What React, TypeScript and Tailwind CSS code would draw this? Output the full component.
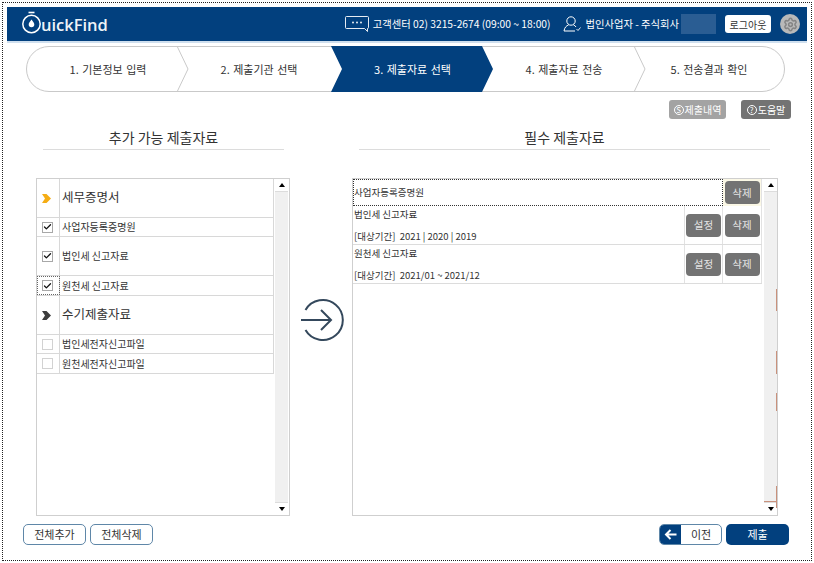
import React from 'react';
import { Check, Settings } from 'lucide-react';

const font = "[font-family:'Noto_Sans_CJK_KR','Liberation_Sans',sans-serif]";

const steps = [
  { label: '1. 기본정보 입력', box: 'w-[150px] pl-[12px]' },
  { label: '2. 제출기관 선택', box: 'w-[154px] pl-[10px]' },
  { label: '3. 제출자료 선택', box: 'w-[151px] pl-[12px]' },
  { label: '4. 제출자료 전송', box: 'w-[152px] pl-[12px]' },
  { label: '5. 전송결과 확인', box: 'w-[150px]' },
];

function Logo() {
  return (
    <div className="flex items-center">
      <svg width="19" height="24" viewBox="0 0 19 24" className="mt-[-3px]">
        <path d="M6.5 1.5h6" stroke="#fff" strokeWidth="1.6" fill="none" />
        <circle cx="9.5" cy="13" r="8.7" stroke="#fff" strokeWidth="1.5" fill="none" />
        <path d="M9.5 8.5c2 2.6 2.8 3.7 2.8 5a2.8 2.8 0 0 1-5.6 0c0-1.3.8-2.4 2.8-5z" fill="#fff" />
      </svg>
      <span className="text-[16.5px] leading-none font-semibold text-[#eef3f8] [font-family:'Open_Sans',sans-serif] mt-[3px]">uickFind</span>
    </div>
  );
}

function Stepper() {
  return (
    <div className="relative flex w-[759px] h-[46px] ml-[19px] mt-[3px] rounded-full border border-[#c9c9c9] bg-white">
      {steps.map((s, i) => (
        <div key={s.label} className={`relative flex items-center justify-center ${s.box} h-full shrink-0`}>
          {i === 2 && (
            <svg width="163" height="46" viewBox="0 0 163 46" className="absolute left-0 top-[-1px]">
              <path d="M0 0H151L162 23L151 46H0L11 23Z" fill="#02407e" />
            </svg>
          )}
          {(i === 0 || i === 3) && (
            <svg width="13" height="46" viewBox="0 0 13 46" className="absolute left-full top-[-1px]">
              <path d="M0 0L11 23L0 46" stroke="#c9c9c9" fill="none" />
            </svg>
          )}
          <span className={`relative text-[11px] [word-spacing:1px] ${i === 2 ? 'text-white' : 'text-[#333]'}`}>{s.label}</span>
        </div>
      ))}
    </div>
  );
}

function Box({ checked }: { checked?: boolean }) {
  return (
    <span className={`flex items-center justify-center w-[11px] h-[11px] border bg-white ${checked ? 'border-[#a8a8a8]' : 'border-[#d2d2d2]'}`}>
      {checked && <Check size={10} strokeWidth={3.5} className="text-[#111]" />}
    </span>
  );
}

function Chevron({ color }: { color: string }) {
  return (
    <svg width="10" height="9" viewBox="0 0 10 9">
      <path d="M0 0H4.5L9 4.5L4.5 9H0L3 4.5Z" fill={color} />
    </svg>
  );
}

function Scrollbar() {
  return (
    <div className="flex flex-col w-[13px] h-full bg-[#f0f0f0] shrink-0">
      <div className="flex items-center justify-center h-[13px] bg-white border-b border-[#dcdcdc]">
        <span className="border-x-[3px] border-x-transparent border-b-[4px] border-b-black" />
      </div>
      <div className="flex-1" />
      <div className="flex items-center justify-center h-[13px] bg-white border-t border-[#dcdcdc]">
        <span className="border-x-[3px] border-x-transparent border-t-[4px] border-t-black" />
      </div>
    </div>
  );
}

function HeadRow({ label, color }: { label: string; color: string }) {
  return (
    <div className="flex h-[39px] border-b border-[#d8d8d8]">
      <div className="flex items-center justify-center w-[23px] pr-[2px] border-r border-[#d8d8d8]">
        <Chevron color={color} />
      </div>
      <div className="flex items-center pl-[2px] pb-[1px] text-[12.5px] text-[#333]">{label}</div>
    </div>
  );
}

function CheckRow({ label, checked, h, focus }: { label: string; checked?: boolean; h: string; focus?: boolean }) {
  return (
    <div className={`flex ${h} border-b border-[#d8d8d8]`}>
      <div className={`flex items-center justify-center w-[23px] pr-[2px] border-r border-[#d8d8d8] ${focus ? 'outline-1 outline-dotted outline-[#666] -outline-offset-1' : ''}`}>
        <Box checked={checked} />
      </div>
      <div className="flex items-center pl-[2px] pb-[1px] text-[10px] text-[#333]">{label}</div>
    </div>
  );
}

function GrayBtn({ label }: { label: string }) {
  return (
    <button className="w-[35px] h-[23px] rounded-[4px] bg-[#737373] text-[10.5px] text-[#e4e4e4]">{label}</button>
  );
}

function DocRow({ title, period }: { title: string; period: string }) {
  return (
    <div className="flex h-[39px] border-b border-[#dcdcdc]">
      <div className="flex flex-col justify-between flex-1 pl-[1px] pt-[2px] pb-[1px] text-[9.5px] leading-[13px] text-[#333] whitespace-pre">
        <span>{title}</span>
        <span>{period}</span>
      </div>
      <div className="flex items-center justify-center w-[39px] border-x border-[#e2e2e2]">
        <GrayBtn label="설정" />
      </div>
      <div className="flex items-center justify-center w-[39px] border-r border-[#e2e2e2]">
        <GrayBtn label="삭제" />
      </div>
    </div>
  );
}

function OutlineBtn({ label }: { label: string }) {
  return (
    <button className="w-[63px] h-[21px] rounded-[5px] border border-[#5f87a8] bg-white text-[11px] text-[#333]">{label}</button>
  );
}

function Ring({ mark }: { mark: string }) {
  return (
    <span className="inline-flex items-center justify-center w-[10px] h-[10px] mr-[1px] rounded-full border border-white text-[8px] leading-none">{mark}</span>
  );
}

export default function App() {
  return (
    <div className={`w-[814px] h-[563px] bg-white overflow-hidden pt-[2px] pl-[2px] ${font}`}>
      <div className="w-[810px] h-[559px] border border-dotted border-[#222] pt-[4px] pl-[4px]">
        <header className="flex items-center w-[800px] h-[36px] pl-[15px] bg-[#02407e] border-b-2 border-[#cfdfee]">
          <Logo />
          <div className="flex items-center ml-auto text-[10.3px] text-white">
            <svg width="24" height="16" viewBox="0 0 24 16" className="mr-[4px]">
              <path d="M1.5.5h21a1 1 0 0 1 1 1v10a1 1 0 0 1-1 1v3l-3-3h-18a1 1 0 0 1-1-1v-10a1 1 0 0 1 1-1z" fill="none" stroke="#fff" strokeWidth="0.9" />
              <circle cx="8" cy="6.5" r="0.9" fill="#fff" />
              <circle cx="12" cy="6.5" r="0.9" fill="#fff" />
              <circle cx="16" cy="6.5" r="0.9" fill="#fff" />
            </svg>
            <span>고객센터 02) 3215-2674 (09:00 ~ 18:00)</span>
            <svg width="18" height="16" viewBox="0 0 18 16" className="ml-[12px] mr-[5px]">
              <circle cx="8" cy="5" r="4.2" fill="none" stroke="#fff" strokeWidth="1" />
              <path d="M1 15c.5-3.5 2.5-5.5 4.5-6M10.5 9c1 .3 2 1 2.5 2M1 15h11" fill="none" stroke="#fff" strokeWidth="1" />
              <path d="M13.5 13l1.5 1.5 2.5-3" fill="none" stroke="#fff" strokeWidth="0.9" />
            </svg>
            <span>법인사업자 - 주식회사</span>
            <span className="w-[35px] h-[20px] ml-[2px] bg-[#2a5d93]" />
            <button className="ml-[9px] w-[46px] h-[18px] rounded-[3px] bg-white text-[10px] text-[#333]">로그아웃</button>
            <span className="flex items-center justify-center w-[20px] h-[20px] ml-[9px] mr-[7px] rounded-full bg-[#b9b9b9]">
              <Settings size={15} strokeWidth={2.4} className="text-[#858585]" />
            </span>
          </div>
        </header>

        <Stepper />

        <div className="flex justify-end gap-[15px] w-[784px] mt-[8px]">
          <button className="flex items-center justify-center w-[57px] h-[19px] rounded-[3px] bg-[#a3a3a3] text-[10px] text-white"><Ring mark="S" />제출내역</button>
          <button className="flex items-center justify-center w-[50px] h-[19px] rounded-[3px] bg-[#737373] text-[10px] text-white"><Ring mark="?" />도움말</button>
        </div>

        <div className="flex mt-[1px]">
          <div className="w-[241px] ml-[36px] border-b border-[#dcdcdc] pt-[6px] text-center text-[14px] leading-[23px] text-[#333]">추가 가능 제출자료</div>
          <div className="w-[411px] ml-[75px] border-b border-[#dcdcdc] pt-[6px] text-center text-[14px] leading-[23px] text-[#333]">필수 제출자료</div>
        </div>

        <div className="flex items-start mt-[28px]">
          <div className="flex flex-col ml-[16px]">
            <div className="flex ml-[13px] w-[254px] h-[338px] border border-[#cfcfcf] bg-white">
              <div className="w-[237px] h-[195px] border-r border-[#d8d8d8]">
                <HeadRow label="세무증명서" color="#f5ad14" />
                <CheckRow label="사업자등록증명원" checked h="h-[19px]" />
                <CheckRow label="법인세 신고자료" checked h="h-[39px]" />
                <CheckRow label="원천세 신고자료" checked h="h-[20px]" focus />
                <HeadRow label="수기제출자료" color="#3d3d3d" />
                <CheckRow label="법인세전자신고파일" h="h-[19px]" />
                <CheckRow label="원천세전자신고파일" h="h-[20px]" />
              </div>
              <div className="ml-auto mr-[1px] h-full">
                <Scrollbar />
              </div>
            </div>
            <div className="flex gap-[4px] mt-[8px]">
              <OutlineBtn label="전체추가" />
              <OutlineBtn label="전체삭제" />
            </div>
          </div>

          <svg width="44" height="44" viewBox="0 0 44 44" className="ml-[10px] mt-[120px] shrink-0">
            <path d="M5.5 12a20 20 0 1 1 0 20" fill="none" stroke="#34485c" strokeWidth="2" />
            <path d="M1 22h30M21 12l10 10-10 10" fill="none" stroke="#34485c" strokeWidth="2" />
          </svg>

          <div className="flex flex-col ml-[8px]">
            <div className="relative flex w-[426px] h-[338px] border border-[#cfcfcf] bg-white">
              <div className="w-[409px]">
                <div className="flex h-[27px]">
                  <div className="flex items-center flex-1 text-[9.5px] text-[#333] border border-dotted border-[#333]">사업자등록증명원</div>
                  <div className="flex items-center justify-center w-[39px] bg-[#fbf8e6] border-r border-[#e2e2e2]">
                    <GrayBtn label="삭제" />
                  </div>
                </div>
                <DocRow title="법인세 신고자료" period="[대상기간]  2021 | 2020 | 2019" />
                <DocRow title="원천세 신고자료" period="[대상기간]  2021/01 ~ 2021/12" />
              </div>
              <div className="ml-auto h-full">
                <Scrollbar />
              </div>
              {/* 스크롤바 오른쪽에 남은 주황색 자국 */}
              <span className="absolute right-0 top-[110px] w-[1px] h-[22px] bg-[#c9917c]" />
              <span className="absolute right-0 top-[172px] w-[1px] h-[23px] bg-[#c9917c]" />
              <span className="absolute right-0 top-[214px] w-[1px] h-[18px] bg-[#c9917c]" />
              <span className="absolute right-0 top-[307px] w-[1px] h-[22px] bg-[#c9917c]" />
              <span className="absolute right-0 top-[322px] w-[13px] h-[1px] bg-[#c9917c]" />
            </div>
            <div className="flex gap-[4px] ml-[307px] mt-[8px]">
              <button className="flex w-[63px] h-[21px] rounded-[5px] border border-[#5f87a8] bg-white overflow-hidden text-[11px] text-[#333]">
                <span className="flex items-center justify-center w-[21px] h-full bg-[#02407e] text-white">
                  <svg width="13" height="11" viewBox="0 0 13 11">
                    <path d="M12.5 5.5H2M6.5 1L2 5.5 6.5 10" fill="none" stroke="#fff" strokeWidth="2" />
                  </svg>
                </span>
                <span className="flex-1 leading-[19px]">이전</span>
              </button>
              <button className="w-[63px] h-[21px] rounded-[5px] bg-[#02407e] text-[11px] text-white">제출</button>
            </div>
          </div>
        </div>
      </div>
    </div>
  );
}
